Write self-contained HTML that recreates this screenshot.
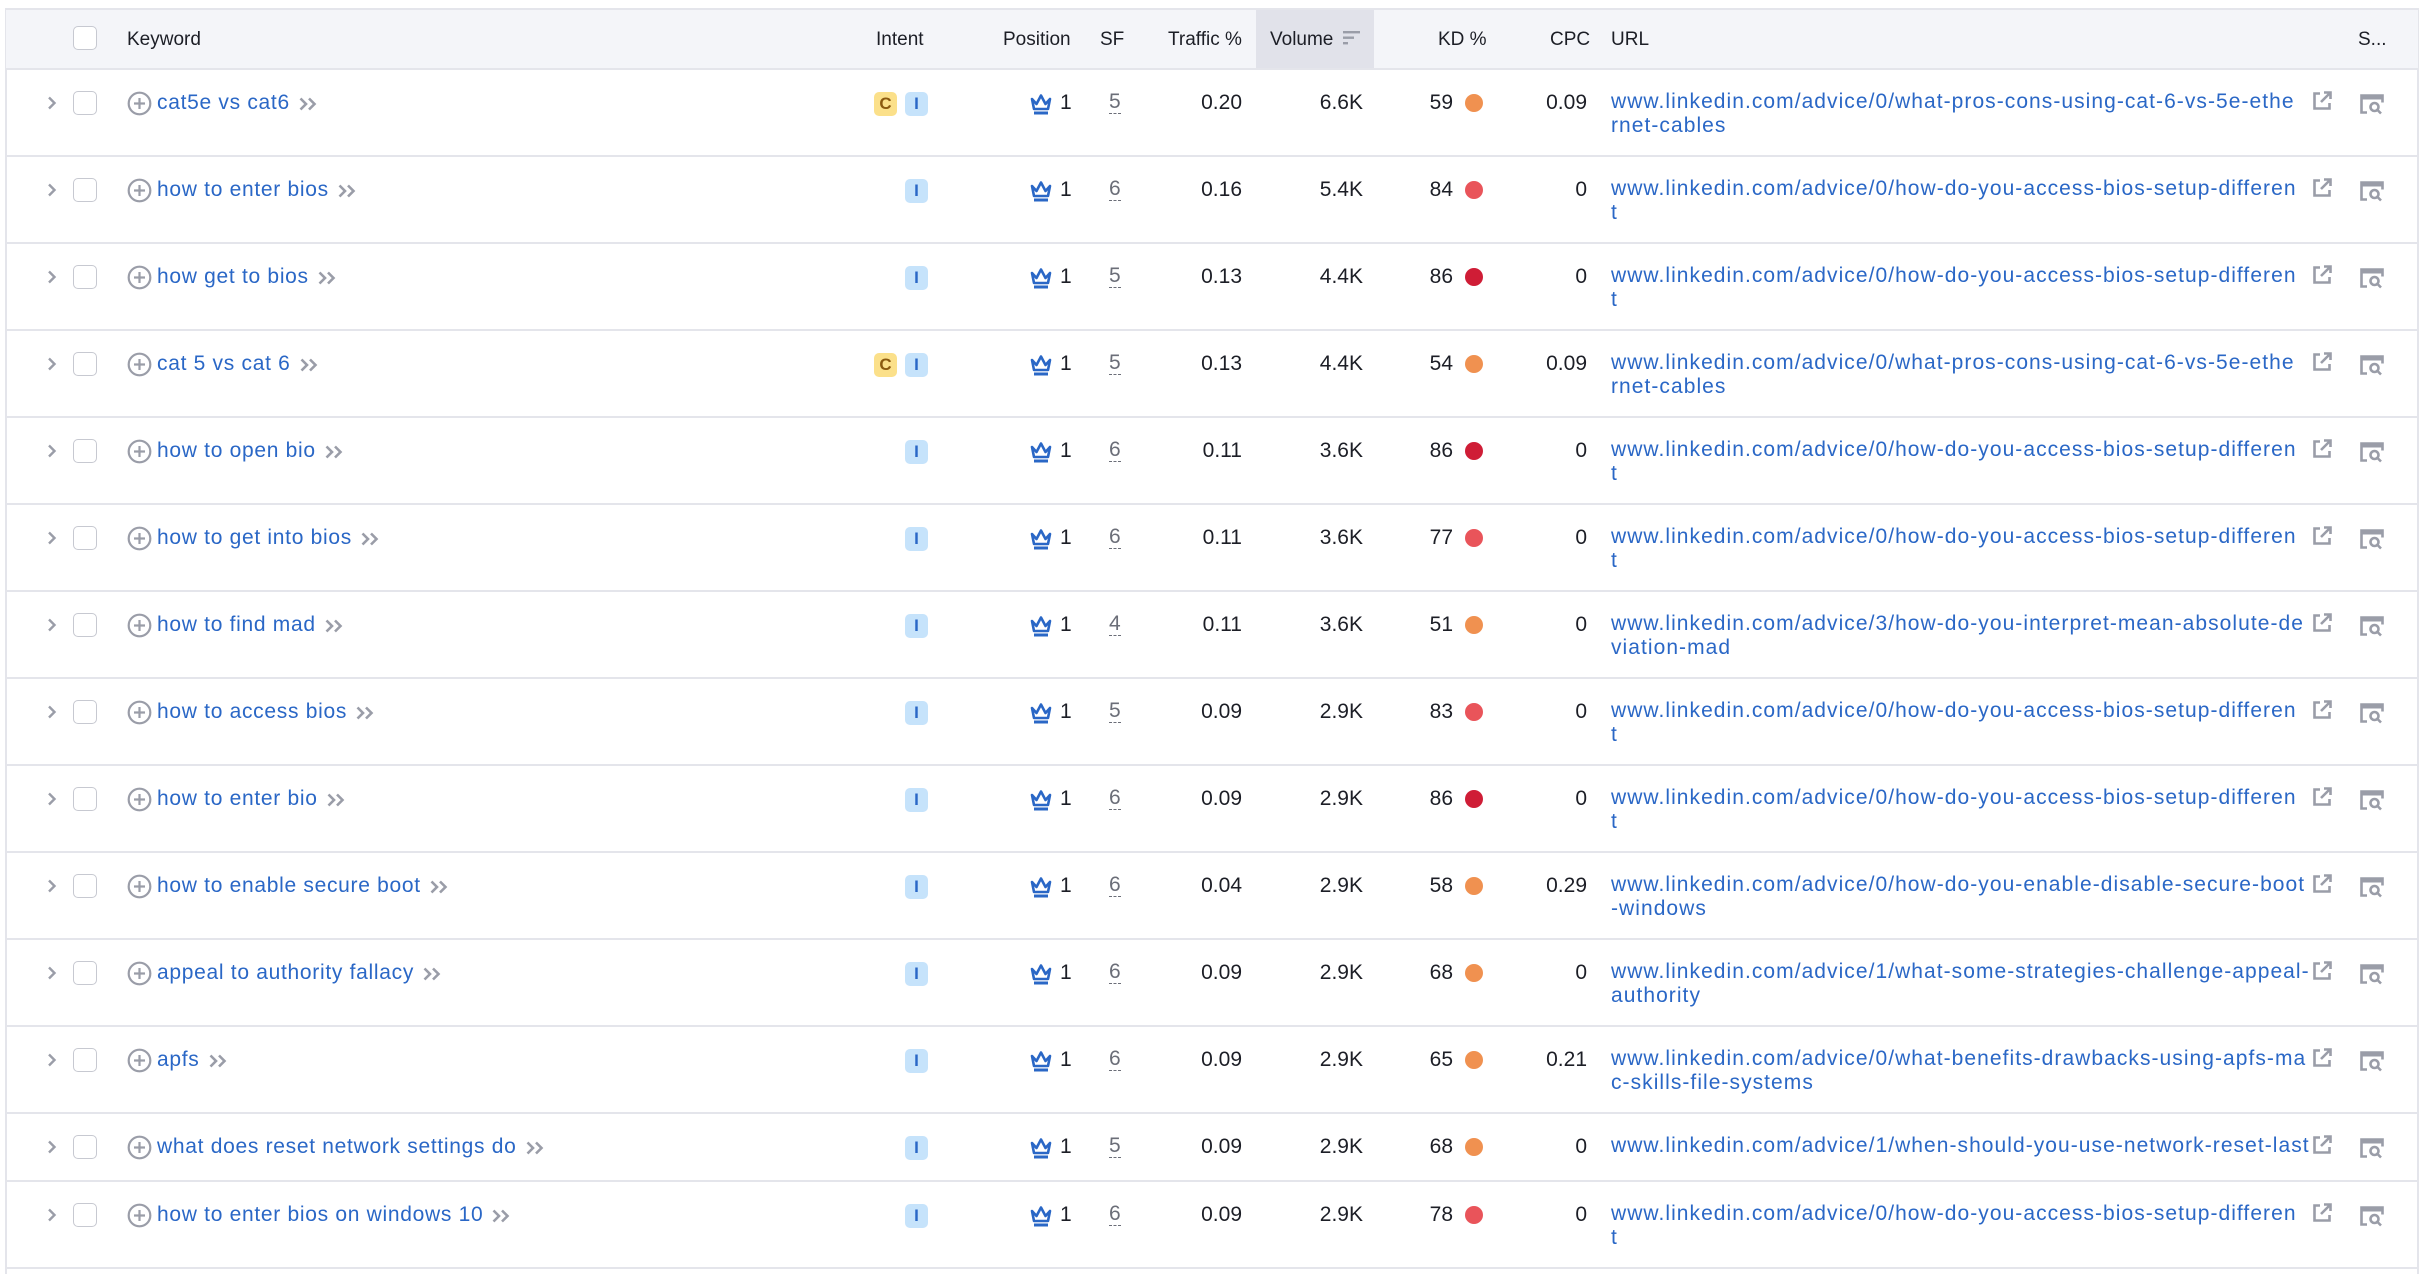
<!DOCTYPE html>
<html><head><meta charset="utf-8"><style>
*{margin:0;padding:0;box-sizing:border-box}
body{width:2422px;height:1274px;background:#fff;font-family:"Liberation Sans",Arial,sans-serif;font-size:21px;color:#1c1e26;position:relative;overflow:hidden}
.frame{position:absolute;left:5px;top:8px;width:2414px;height:1266px;border-left:2px solid #e4e5eb;border-right:2px solid #e4e5eb;border-top:2px solid #e4e5eb}
.hd{position:absolute;left:6px;top:10px;width:2412px;height:60px;background:#f4f5f9;border-bottom:2px solid #e4e5eb;font-size:19px;color:#1c1e26}
.hd span{position:absolute;top:18px;line-height:24px}
.volbg{position:absolute;left:1250px;top:0;width:118px;height:58px;background:#e1e2ea}
.r{position:absolute;left:6px;width:2412px;border-bottom:2px solid #e4e5eb}
.r>*{position:absolute}
.chev{left:41px;top:26px;width:10px;height:14px}
.cb{left:67px;top:21px;width:24px;height:24px;border:1.5px solid #c7c9d1;border-radius:5px;background:#fff}
.pl{left:121px;top:21px;width:25px;height:25px}
.kw{left:151px;top:21px;line-height:24px;color:#2a67c6;white-space:nowrap;letter-spacing:0.7px}
.kw svg{position:relative;top:3px;margin-left:8px}
.b{top:22px;width:23px;height:24px;border-radius:5px;font-size:17px;font-weight:bold;text-align:center;line-height:24px}
.bc{left:868px;background:#fbe08a;color:#8b5a10}
.bi{left:899px;background:#c6e3fb;color:#2a67c6}
.cr{left:1023px;top:22px;width:24px;height:24px}
.p1{left:1054px;top:21px;line-height:24px}
.sf{left:1103px;top:21px;color:#6b6e78;border-bottom:1.5px dashed #6b6e78;line-height:22px}
.tr{left:1136px;width:100px;text-align:right;top:21px;line-height:24px}
.vo{left:1257px;width:100px;text-align:right;top:21px;line-height:24px}
.kd{left:1387px;width:60px;text-align:right;top:21px;line-height:24px}
.dot{left:1459px;top:24px;width:18px;height:18px;border-radius:50%}
.o{background:#f09150}.rd{background:#e9545a}.dr{background:#cf1d36}
.cpc{left:1481px;width:100px;text-align:right;top:21px;line-height:24px}
.url{left:1605px;top:20px;line-height:24px;color:#2a67c6;white-space:nowrap;letter-spacing:1.05px}
.ext{left:2305px;top:20px;width:22px;height:22px}
.serp{left:2353px;top:23px;width:26px;height:22px}
</style></head><body>
<div class="frame"></div>
<div class="hd">
<div class="volbg"></div>
<div style="position:absolute;left:67px;top:16px;width:24px;height:24px;border:1.5px solid #c7c9d1;border-radius:5px;background:#fff"></div>
<span style="left:121px">Keyword</span>
<span style="left:870px">Intent</span>
<span style="left:997px">Position</span>
<span style="left:1094px">SF</span>
<span style="left:1162px">Traffic %</span>
<span style="left:1264px">Volume</span>
<svg style="position:absolute;left:1337px;top:20px" width="18" height="16" viewBox="0 0 18 16"><rect x="0" y="1" width="17" height="2.4" fill="#9a9da8"/><rect x="0" y="6.5" width="11" height="2.4" fill="#9a9da8"/><rect x="0" y="12" width="5" height="2.4" fill="#9a9da8"/></svg>
<span style="left:1432px">KD %</span>
<span style="left:1544px">CPC</span>
<span style="left:1605px">URL</span>
<span style="left:2352px">S...</span>
</div>

<svg width="0" height="0" style="position:absolute">
<defs>
<symbol id="chev" viewBox="0 0 10 14"><path d="M2 1.5 L7.5 7 L2 12.5" fill="none" stroke="#9a9da8" stroke-width="2.4"/></symbol>
<symbol id="plus" viewBox="0 0 25 25"><circle cx="12.5" cy="12.5" r="10.8" fill="none" stroke="#9a9da8" stroke-width="2.2"/><path d="M12.5 7v11M7 12.5h11" stroke="#9a9da8" stroke-width="2.2"/></symbol>
<symbol id="dch" viewBox="0 0 20 16"><path d="M2.5 2.5 L8 8 L2.5 13.5 M11 2.5 L16.5 8 L11 13.5" fill="none" stroke="#9a9da8" stroke-width="2.6"/></symbol>
<symbol id="crown" viewBox="0 0 24 24"><path d="M3 7 L7.5 12 L12 3.5 L16.5 12 L21 7 L19 17 H5 Z" fill="none" stroke="#2a67c6" stroke-width="2.6" stroke-linejoin="round"/><rect x="5" y="19.5" width="14" height="3" fill="#2a67c6"/></symbol>
<symbol id="ext" viewBox="0 0 22 22"><path d="M9 3.5H3.5v15h15V13" fill="none" stroke="#9a9da8" stroke-width="2.6"/><path d="M10 12 L19 3 M13 2.5h6.5V9" fill="none" stroke="#9a9da8" stroke-width="2.6"/></symbol>
<symbol id="serp" viewBox="0 0 26 22"><path d="M8 19.5H2.5V2.5h21v7" fill="none" stroke="#9a9da8" stroke-width="2.6"/><rect x="2.5" y="2.5" width="21" height="4" fill="#9a9da8"/><circle cx="15.5" cy="14" r="4" fill="none" stroke="#9a9da8" stroke-width="2.6"/><path d="M18.5 17 L22 20.5" stroke="#9a9da8" stroke-width="2.6"/></symbol>
</defs></svg>

<div class="r" style="top:70px;height:87px"><svg class="chev"><use href="#chev"/></svg><div class="cb"></div><svg class="pl"><use href="#plus"/></svg><div class="kw">cat5e vs cat6<svg width="20" height="16"><use href="#dch"/></svg></div><div class="b bc">C</div><div class="b bi">I</div><svg class="cr"><use href="#crown"/></svg><div class="p1">1</div><div class="sf">5</div><div class="tr">0.20</div><div class="vo">6.6K</div><div class="kd">59</div><div class="dot o"></div><div class="cpc">0.09</div><div class="url">www.linkedin.com/advice/0/what-pros-cons-using-cat-6-vs-5e-ethe<br>rnet-cables</div><svg class="ext"><use href="#ext"/></svg><svg class="serp"><use href="#serp"/></svg></div>

<div class="r" style="top:157px;height:87px"><svg class="chev"><use href="#chev"/></svg><div class="cb"></div><svg class="pl"><use href="#plus"/></svg><div class="kw">how to enter bios<svg width="20" height="16"><use href="#dch"/></svg></div><div class="b bi">I</div><svg class="cr"><use href="#crown"/></svg><div class="p1">1</div><div class="sf">6</div><div class="tr">0.16</div><div class="vo">5.4K</div><div class="kd">84</div><div class="dot rd"></div><div class="cpc">0</div><div class="url">www.linkedin.com/advice/0/how-do-you-access-bios-setup-differen<br>t</div><svg class="ext"><use href="#ext"/></svg><svg class="serp"><use href="#serp"/></svg></div>

<div class="r" style="top:244px;height:87px"><svg class="chev"><use href="#chev"/></svg><div class="cb"></div><svg class="pl"><use href="#plus"/></svg><div class="kw">how get to bios<svg width="20" height="16"><use href="#dch"/></svg></div><div class="b bi">I</div><svg class="cr"><use href="#crown"/></svg><div class="p1">1</div><div class="sf">5</div><div class="tr">0.13</div><div class="vo">4.4K</div><div class="kd">86</div><div class="dot dr"></div><div class="cpc">0</div><div class="url">www.linkedin.com/advice/0/how-do-you-access-bios-setup-differen<br>t</div><svg class="ext"><use href="#ext"/></svg><svg class="serp"><use href="#serp"/></svg></div>

<div class="r" style="top:331px;height:87px"><svg class="chev"><use href="#chev"/></svg><div class="cb"></div><svg class="pl"><use href="#plus"/></svg><div class="kw">cat 5 vs cat 6<svg width="20" height="16"><use href="#dch"/></svg></div><div class="b bc">C</div><div class="b bi">I</div><svg class="cr"><use href="#crown"/></svg><div class="p1">1</div><div class="sf">5</div><div class="tr">0.13</div><div class="vo">4.4K</div><div class="kd">54</div><div class="dot o"></div><div class="cpc">0.09</div><div class="url">www.linkedin.com/advice/0/what-pros-cons-using-cat-6-vs-5e-ethe<br>rnet-cables</div><svg class="ext"><use href="#ext"/></svg><svg class="serp"><use href="#serp"/></svg></div>

<div class="r" style="top:418px;height:87px"><svg class="chev"><use href="#chev"/></svg><div class="cb"></div><svg class="pl"><use href="#plus"/></svg><div class="kw">how to open bio<svg width="20" height="16"><use href="#dch"/></svg></div><div class="b bi">I</div><svg class="cr"><use href="#crown"/></svg><div class="p1">1</div><div class="sf">6</div><div class="tr">0.11</div><div class="vo">3.6K</div><div class="kd">86</div><div class="dot dr"></div><div class="cpc">0</div><div class="url">www.linkedin.com/advice/0/how-do-you-access-bios-setup-differen<br>t</div><svg class="ext"><use href="#ext"/></svg><svg class="serp"><use href="#serp"/></svg></div>

<div class="r" style="top:505px;height:87px"><svg class="chev"><use href="#chev"/></svg><div class="cb"></div><svg class="pl"><use href="#plus"/></svg><div class="kw">how to get into bios<svg width="20" height="16"><use href="#dch"/></svg></div><div class="b bi">I</div><svg class="cr"><use href="#crown"/></svg><div class="p1">1</div><div class="sf">6</div><div class="tr">0.11</div><div class="vo">3.6K</div><div class="kd">77</div><div class="dot rd"></div><div class="cpc">0</div><div class="url">www.linkedin.com/advice/0/how-do-you-access-bios-setup-differen<br>t</div><svg class="ext"><use href="#ext"/></svg><svg class="serp"><use href="#serp"/></svg></div>

<div class="r" style="top:592px;height:87px"><svg class="chev"><use href="#chev"/></svg><div class="cb"></div><svg class="pl"><use href="#plus"/></svg><div class="kw">how to find mad<svg width="20" height="16"><use href="#dch"/></svg></div><div class="b bi">I</div><svg class="cr"><use href="#crown"/></svg><div class="p1">1</div><div class="sf">4</div><div class="tr">0.11</div><div class="vo">3.6K</div><div class="kd">51</div><div class="dot o"></div><div class="cpc">0</div><div class="url">www.linkedin.com/advice/3/how-do-you-interpret-mean-absolute-de<br>viation-mad</div><svg class="ext"><use href="#ext"/></svg><svg class="serp"><use href="#serp"/></svg></div>

<div class="r" style="top:679px;height:87px"><svg class="chev"><use href="#chev"/></svg><div class="cb"></div><svg class="pl"><use href="#plus"/></svg><div class="kw">how to access bios<svg width="20" height="16"><use href="#dch"/></svg></div><div class="b bi">I</div><svg class="cr"><use href="#crown"/></svg><div class="p1">1</div><div class="sf">5</div><div class="tr">0.09</div><div class="vo">2.9K</div><div class="kd">83</div><div class="dot rd"></div><div class="cpc">0</div><div class="url">www.linkedin.com/advice/0/how-do-you-access-bios-setup-differen<br>t</div><svg class="ext"><use href="#ext"/></svg><svg class="serp"><use href="#serp"/></svg></div>

<div class="r" style="top:766px;height:87px"><svg class="chev"><use href="#chev"/></svg><div class="cb"></div><svg class="pl"><use href="#plus"/></svg><div class="kw">how to enter bio<svg width="20" height="16"><use href="#dch"/></svg></div><div class="b bi">I</div><svg class="cr"><use href="#crown"/></svg><div class="p1">1</div><div class="sf">6</div><div class="tr">0.09</div><div class="vo">2.9K</div><div class="kd">86</div><div class="dot dr"></div><div class="cpc">0</div><div class="url">www.linkedin.com/advice/0/how-do-you-access-bios-setup-differen<br>t</div><svg class="ext"><use href="#ext"/></svg><svg class="serp"><use href="#serp"/></svg></div>

<div class="r" style="top:853px;height:87px"><svg class="chev"><use href="#chev"/></svg><div class="cb"></div><svg class="pl"><use href="#plus"/></svg><div class="kw">how to enable secure boot<svg width="20" height="16"><use href="#dch"/></svg></div><div class="b bi">I</div><svg class="cr"><use href="#crown"/></svg><div class="p1">1</div><div class="sf">6</div><div class="tr">0.04</div><div class="vo">2.9K</div><div class="kd">58</div><div class="dot o"></div><div class="cpc">0.29</div><div class="url">www.linkedin.com/advice/0/how-do-you-enable-disable-secure-boot<br>-windows</div><svg class="ext"><use href="#ext"/></svg><svg class="serp"><use href="#serp"/></svg></div>

<div class="r" style="top:940px;height:87px"><svg class="chev"><use href="#chev"/></svg><div class="cb"></div><svg class="pl"><use href="#plus"/></svg><div class="kw">appeal to authority fallacy<svg width="20" height="16"><use href="#dch"/></svg></div><div class="b bi">I</div><svg class="cr"><use href="#crown"/></svg><div class="p1">1</div><div class="sf">6</div><div class="tr">0.09</div><div class="vo">2.9K</div><div class="kd">68</div><div class="dot o"></div><div class="cpc">0</div><div class="url">www.linkedin.com/advice/1/what-some-strategies-challenge-appeal-<br>authority</div><svg class="ext"><use href="#ext"/></svg><svg class="serp"><use href="#serp"/></svg></div>

<div class="r" style="top:1027px;height:87px"><svg class="chev"><use href="#chev"/></svg><div class="cb"></div><svg class="pl"><use href="#plus"/></svg><div class="kw">apfs<svg width="20" height="16"><use href="#dch"/></svg></div><div class="b bi">I</div><svg class="cr"><use href="#crown"/></svg><div class="p1">1</div><div class="sf">6</div><div class="tr">0.09</div><div class="vo">2.9K</div><div class="kd">65</div><div class="dot o"></div><div class="cpc">0.21</div><div class="url">www.linkedin.com/advice/0/what-benefits-drawbacks-using-apfs-ma<br>c-skills-file-systems</div><svg class="ext"><use href="#ext"/></svg><svg class="serp"><use href="#serp"/></svg></div>

<div class="r" style="top:1114px;height:68px"><svg class="chev"><use href="#chev"/></svg><div class="cb"></div><svg class="pl"><use href="#plus"/></svg><div class="kw">what does reset network settings do<svg width="20" height="16"><use href="#dch"/></svg></div><div class="b bi">I</div><svg class="cr"><use href="#crown"/></svg><div class="p1">1</div><div class="sf">5</div><div class="tr">0.09</div><div class="vo">2.9K</div><div class="kd">68</div><div class="dot o"></div><div class="cpc">0</div><div class="url">www.linkedin.com/advice/1/when-should-you-use-network-reset-last</div><svg class="ext"><use href="#ext"/></svg><svg class="serp"><use href="#serp"/></svg></div>

<div class="r" style="top:1182px;height:87px"><svg class="chev"><use href="#chev"/></svg><div class="cb"></div><svg class="pl"><use href="#plus"/></svg><div class="kw">how to enter bios on windows 10<svg width="20" height="16"><use href="#dch"/></svg></div><div class="b bi">I</div><svg class="cr"><use href="#crown"/></svg><div class="p1">1</div><div class="sf">6</div><div class="tr">0.09</div><div class="vo">2.9K</div><div class="kd">78</div><div class="dot rd"></div><div class="cpc">0</div><div class="url">www.linkedin.com/advice/0/how-do-you-access-bios-setup-differen<br>t</div><svg class="ext"><use href="#ext"/></svg><svg class="serp"><use href="#serp"/></svg></div>
</body></html>
